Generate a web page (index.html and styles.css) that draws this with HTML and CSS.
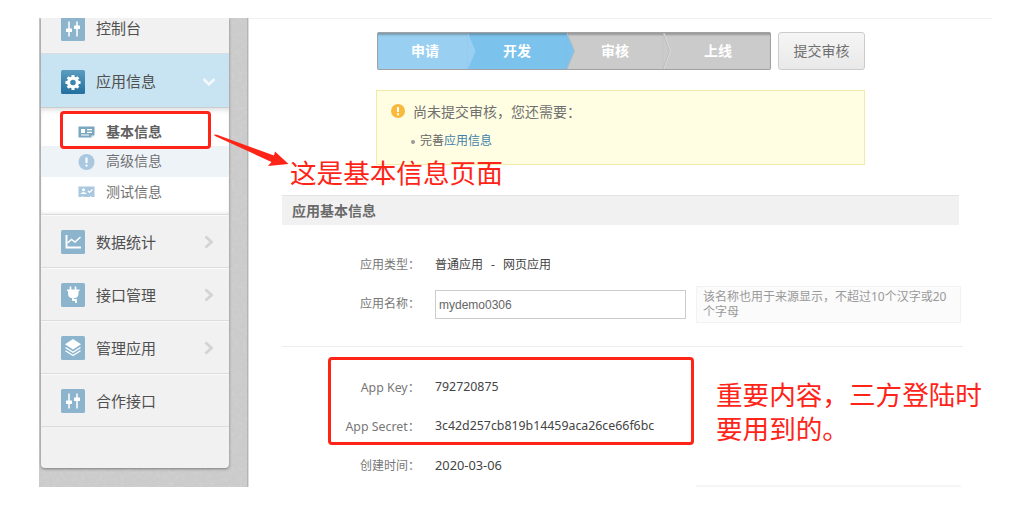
FILE: index.html
```html
<!DOCTYPE html>
<html lang="zh-CN">
<head>
  <meta charset="UTF-8" />
  <meta name="viewport" content="width=device-width, initial-scale=1.0"/>
  <title>应用基本信息</title>
  <link rel="stylesheet" href="styles.css">
</head>
<body>

  <div class="page">
    <aside class="sidebar">
      <svg class="grain" width="208" height="469">
        <filter id="grain">
          <feTurbulence type="fractalNoise" baseFrequency="0.28" numOctaves="2" />
          <feColorMatrix type="matrix" values="0 0 0 0 1  0 0 0 0 1  0 0 0 0 1  1.1 0 0 0 -0.45" />
        </filter>
        <rect width="208" height="469" filter="url(#grain)" />
      </svg>
      <nav class="menu">
        <a class="menu-item first">
          <svg class="icon" viewBox="0 0 24 24"><rect width="24" height="24" rx="1.5" fill="#8cb5cd"/><path d="M8 4.500v15M16 4.500v15" stroke="#fff" stroke-width="1.500"/><path d="M5 11.500h6v3.500H5zM13 8.500h6V12h-6z" fill="#fff"/></svg>
          <span>控制台</span>
        </a>
        <a class="menu-item active">
          <svg class="icon" viewBox="0 0 24 24">
            <defs><linearGradient id="gear" x1="0" y1="0" x2="0" y2="1"><stop offset="0" stop-color="#5b9dbf"/><stop offset="1" stop-color="#236f9f"/></linearGradient></defs>
            <rect width="24" height="24" rx="1.5" fill="url(#gear)"/>
            <circle cx="12" cy="12.500" r="4.400" fill="none" stroke="#fff" stroke-width="3.200"/>
            <path d="M12 5v2.500M12 17.500V20M4.500 12.500H7M17 12.500h2.500M6.700 7.200l1.800 1.800M15.500 16l1.800 1.800M6.700 17.800L8.500 16M15.500 9l1.800-1.800" stroke="#fff" stroke-width="3"/>
          </svg>
          <span>应用信息</span>
          <svg class="chevron" viewBox="0 0 14 14"><path d="M1.500 4L7 9.500 12.500 4" fill="none" stroke="#f4f9fc" stroke-width="2.600"/></svg>
        </a>
        <div class="submenu">
          <a class="submenu-item current">
            <svg class="sub-icon" viewBox="0 0 17 14"><path d="M.5 1.500h16v8.500l-3 2.500H.5z" fill="#7ba7c0"/><path d="M3 4h4v4H3zM9 4h5v1.300H9zM9 6.700h5V8H9zM3 9.500h8v1H3z" fill="#fff"/><path d="M13 13.500V10.500h3.500z" fill="#cfe1ec"/></svg>
            <span>基本信息</span>
          </a>
          <a class="submenu-item hover">
            <svg class="sub-icon" viewBox="0 0 16 16"><circle cx="8" cy="8" r="8" fill="#a9c8e0"/><path d="M8 3.500v5.500M8 10.500v2" stroke="#fff" stroke-width="2"/></svg>
            <span>高级信息</span>
          </a>
          <a class="submenu-item">
            <svg class="sub-icon" viewBox="0 0 17 12"><path d="M.5.500h16V11h-3l-1-1-1 1h-6l-1-1-1 1h-3z" fill="#a9c8e0"/><circle cx="5.500" cy="3.800" r="1.500" fill="#fff"/><path d="M2.500 8c.5-2.500 5.500-2.500 6 0z" fill="#fff"/><path d="M10 5l1.500 1.500 3-3" fill="none" stroke="#fff" stroke-width="1.200"/></svg>
            <span>测试信息</span>
          </a>
        </div>
        <a class="menu-item">
          <svg class="icon" viewBox="0 0 24 24"><rect width="24" height="24" rx="1.500" fill="#8cb5cd"/><path d="M5.500 5v12.500H20" fill="none" stroke="#fff" stroke-width="1.900"/><path d="M6.500 13l4-3.500 3.500 2.500 5.500-5" fill="none" stroke="#fff" stroke-width="1.500"/></svg>
          <span>数据统计</span>
          <svg class="chevron" viewBox="0 0 14 14"><path d="M3.500 1.500L9.500 7l-6 5.500" fill="none" stroke="#d3d3d3" stroke-width="2.800"/></svg>
        </a>
        <a class="menu-item">
          <svg class="icon" viewBox="0 0 24 24"><rect width="24" height="24" rx="1.500" fill="#8cb5cd"/><path d="M9.500 3.500V8M14.500 3.500V8M6 7.200h12.500" fill="none" stroke="#fff" stroke-width="1.600"/><path d="M7 7.500h10.500v3c0 3-2 4.500-3.500 4.500h-3.500C9 15 7 13.500 7 10.500z" fill="#fff"/><path d="M12 14v3h3v3" fill="none" stroke="#fff" stroke-width="1.800"/></svg>
          <span>接口管理</span>
          <svg class="chevron" viewBox="0 0 14 14"><path d="M3.500 1.500L9.500 7l-6 5.500" fill="none" stroke="#d3d3d3" stroke-width="2.800"/></svg>
        </a>
        <a class="menu-item">
          <svg class="icon" viewBox="0 0 24 24"><rect width="24" height="24" rx="1.500" fill="#8cb5cd"/><path d="M12 3l8 5.300-8 5.200-8-5.200z" fill="#fff"/><path d="M4.500 11.500L12 16.300l7.500-4.800M4.500 14.800L12 19.600l7.500-4.800" fill="none" stroke="#fff" stroke-width="1.300"/></svg>
          <span>管理应用</span>
          <svg class="chevron" viewBox="0 0 14 14"><path d="M3.500 1.500L9.500 7l-6 5.500" fill="none" stroke="#d3d3d3" stroke-width="2.800"/></svg>
        </a>
        <a class="menu-item">
          <svg class="icon" viewBox="0 0 24 24"><rect width="24" height="24" rx="1.500" fill="#8cb5cd"/><path d="M8 4.500v15M16 4.500v15" stroke="#fff" stroke-width="1.500"/><path d="M5 11.500h6v3.500H5zM13 8.500h6V12h-6z" fill="#fff"/></svg>
          <span>合作接口</span>
        </a>
        <div class="menu-end"></div>
      </nav>
    </aside>

    <main class="content">
      <div class="progress-row">
        <ol class="steps">
          <li class="step done">申请<svg class="tip" viewBox="0 0 8 36"><path d="M0 0l7.500 18L0 36z" fill="#99cff1"/></svg></li>
          <li class="step now">开发<svg class="tip" viewBox="0 0 8 36"><path d="M0 0l7.500 18L0 36z" fill="#7bc2ec"/><path d="M0 0l7.500 18L0 36" fill="none" stroke="#b5bcc0"/></svg></li>
          <li class="step">审核<svg class="tip" viewBox="0 0 8 36"><path d="M0 0l6.500 18L0 36" fill="none" stroke="#bdbdbd"/><path d="M1 0l6.500 18L1 36" fill="none" stroke="#d8d8d8"/></svg></li>
          <li class="step last">上线</li>
        </ol>
        <button class="submit">提交审核</button>
      </div>

      <div class="notice">
        <div class="notice-title">
          <svg class="warn" viewBox="0 0 14 14"><circle cx="7" cy="7" r="7" fill="#f8b93c"/><path d="M7 3v5M7 9.300v1.900" stroke="#fff" stroke-width="2"/></svg>
          尚未提交审核，您还需要：
        </div>
        <div class="notice-item"><i class="dot"></i>完善<a>应用信息</a></div>
      </div>

      <h2 class="section-title">应用基本信息</h2>

      <div class="fields basic">
        <div class="field type-row">
          <label>应用类型：</label>
          <span class="value type-value">普通应用 - 网页应用</span>
        </div>
        <div class="field name-row">
          <label>应用名称：</label>
          <input class="name-input" type="text" value="mydemo0306">
          <p class="hint">该名称也用于来源显示，不超过10个汉字或20个字母</p>
        </div>
      </div>

      <div class="fields keys">
        <div class="field">
          <label class="latin">App Key：</label>
          <span class="value latin">792720875</span>
        </div>
        <div class="field">
          <label class="latin">App Secret：</label>
          <span class="value latin">3c42d257cb819b14459aca26ce66f6bc</span>
        </div>
        <div class="field">
          <label>创建时间：</label>
          <span class="value date">2020-03-06</span>
        </div>
      </div>
      <div class="next-hint"></div>
    </main>
  </div>

  <!-- red notes on top of the page -->
  <div class="mark mark-menu"></div>
  <div class="mark mark-keys"></div>
  <svg class="arrow" viewBox="0 0 80 34"><path d="M1 .5L4 .8 61 21.500 62 17.500 75.500 30 55 32 58.500 28 2 2z" fill="#ff2418"/></svg>
  <div class="note note-page">这是基本信息页面</div>
  <div class="note note-keys">重要内容，三方登陆时<br>要用到的。</div>

</body>
</html>
```

FILE: styles.css
```css
:root {
  --red: #ff2418;
  --line: #d9dde0;
}
* {
  box-sizing: border-box;
}
body {
  margin: 0;
  height: 507px;
  overflow: hidden;
  position: relative;
  background: #fff;
  font-family: "Noto Sans", "Noto Sans CJK SC", sans-serif;
  font-size: 12px;
  color: #444;
}
.page {
  display: flex;
  height: 487px;
  padding: 18px 0 0 39px;
}

/* sidebar */
.sidebar {
  position: relative;
  width: 210px;
  padding-left: 2px;
  background: #cbcbcb;
  border-right: 1px solid #dedede;
  box-shadow: inset -1px 0 0 #b4b4b4;
  overflow: hidden;
}
.grain {
  position: absolute;
  left: 0;
  top: 0;
  opacity: 0.2;
}
.menu {
  position: relative;
  width: 188px;
  height: 450px;
  background: #f1f1f1;
  border-radius: 0 0 4px 4px;
  box-shadow: 0 1px 3px rgba(0, 0, 0, 0.4);
}
.menu-item {
  display: flex;
  align-items: center;
  height: 53px;
  padding: 2px 13px 0 20px;
  border-bottom: 1px solid var(--line);
  box-shadow: inset 0 1px 0 #fafafa;
  font-size: 15px;
  color: #505050;
}
.menu-item span {
  margin-top: -2px;
}
.menu-item.first {
  height: 36px;
  padding: 0 13px 14px 20px;
  box-shadow: none;
}
.menu-item.active {
  height: 54px;
  background: #c8e3f1;
  border-bottom-color: #c9cdd0;
  box-shadow: none;
}
.icon {
  width: 24px;
  height: 24px;
  margin-right: 11px;
}
.chevron {
  width: 14px;
  height: 14px;
  margin-left: auto;
}
.submenu {
  height: 107px;
  padding-top: 8px;
  background: #fff;
  border-bottom: 1px solid var(--line);
  box-shadow: inset 0 4px 5px -2px #ddd, inset 0 -3px 4px -3px #ddd;
}
.submenu-item {
  display: flex;
  align-items: center;
  height: 30px;
  padding-left: 37px;
  font-size: 14px;
  color: #707070;
}
.submenu-item span {
  margin-top: -3px;
}
.submenu-item.current {
  font-weight: bold;
  color: #606060;
  padding-top: 2px;
}
.submenu-item.hover {
  height: 31px;
  background: #eef3f8;
}
.sub-icon {
  width: 17px;
  height: 16px;
  margin-right: 11px;
}
.menu-end {
  height: 41px;
}

/* content */
.content {
  width: 743px;
  border-top: 1px solid #f0f0f0;
  padding: 13px 0 0 33px;
}
.progress-row {
  display: flex;
  gap: 7px;
  margin-left: 95px;
}
.steps {
  display: flex;
  width: 394px;
  height: 38px;
  margin: 0;
  padding: 1px;
  list-style: none;
  background: #cbcbcb;
  border-radius: 2px;
  box-shadow: inset 0 0 0 1px rgba(120, 120, 120, 0.5);
}
.step {
  position: relative;
  width: 96px;
  padding-left: 34px;
  line-height: 36px;
  font-size: 14px;
  font-weight: bold;
  color: #fff;
  box-shadow: inset 0 3px 2px -1px rgba(80, 80, 80, 0.4);
}
.step.done {
  width: 90px;
  padding-left: 33px;
  background: #99cff1;
}
.step.now {
  width: 99px;
  padding-left: 35px;
  background: #7bc2ec;
}
.step.last {
  width: 107px;
  padding-left: 41px;
}
.tip {
  position: absolute;
  left: 100%;
  top: 0;
  z-index: 1;
  width: 8px;
  height: 36px;
}
.submit {
  width: 87px;
  height: 38px;
  padding: 0 0 2px;
  border: 1px solid #ccc;
  border-radius: 3px;
  background: linear-gradient(#f5f5f5, #e9e9e9);
  font-family: inherit;
  font-size: 14px;
  color: #707070;
}
.notice {
  width: 489px;
  height: 75px;
  margin: 20px 0 0 94px;
  padding: 9px 0 0 14px;
  background: #fffee2;
  border: 1px solid #f1eaa9;
}
.notice-title {
  display: flex;
  align-items: center;
  height: 21px;
  font-size: 14px;
  color: #707070;
}
.warn {
  width: 14px;
  height: 14px;
  margin: 1px 8px 0 0;
}
.notice-item {
  display: flex;
  align-items: center;
  height: 18px;
  margin-top: 10px;
  padding-left: 20px;
  color: #666;
}
.notice-item a {
  color: #3f7fac;
}
.dot {
  width: 4px;
  height: 4px;
  margin: 3px 5px 0 0;
  border-radius: 50%;
  background: #999;
}
.section-title {
  width: 677px;
  height: 30px;
  margin: 30px 0 0;
  padding-left: 10px;
  line-height: 29px;
  background: #f1f1f1;
  border-top: 1px solid #e4e4e4;
  font-size: 14px;
  color: #6a6a6a;
}
.fields {
  width: 681px;
}
.basic {
  height: 122px;
  padding-top: 29px;
  border-bottom: 1px solid #ececec;
}
.keys {
  padding-top: 20px;
}
.field {
  display: flex;
  align-items: center;
  height: 39px;
}
.field label {
  width: 138px;
  margin-right: 15px;
  text-align: right;
  color: #777;
  white-space: nowrap;
}
.field .latin {
  font-size: 12.35px;
}
.date {
  font-size: 12.8px;
}
.type-row {
  height: 20px;
}
.type-value {
  word-spacing: 5px;
}
.name-row {
  align-items: flex-start;
  height: 38px;
  margin-top: 12px;
}
.name-row label {
  line-height: 35px;
}
.name-input {
  width: 251px;
  height: 29px;
  margin-top: 4px;
  padding: 0 3px;
  border: 1px solid #ccc;
  font-family: "Liberation Sans", Arial, sans-serif;
  font-size: 12px;
  color: #666;
}
.hint {
  width: 265px;
  height: 37px;
  margin: 0 0 0 10px;
  padding: 2px 6px;
  background: #fbfbfb;
  border: 1px solid #f2f2f2;
  line-height: 15px;
  color: #999;
}
.next-hint {
  width: 265px;
  height: 2px;
  margin: 1px 0 0 414px;
  background: #f5f5f5;
}

/* red notes */
.mark {
  position: absolute;
  border: 3px solid var(--red);
  border-radius: 4px;
}
.mark-menu {
  left: 60px;
  top: 111px;
  width: 151px;
  height: 38px;
}
.mark-keys {
  left: 328px;
  top: 357px;
  width: 366px;
  height: 88px;
}
.arrow {
  position: absolute;
  left: 213px;
  top: 134px;
  width: 80px;
  height: 34px;
}
.note {
  position: absolute;
  font-size: 26.6px;
  line-height: 34px;
  color: var(--red);
  white-space: nowrap;
}
.note-page {
  left: 290px;
  top: 156px;
}
.note-keys {
  left: 716px;
  top: 378px;
}
```
